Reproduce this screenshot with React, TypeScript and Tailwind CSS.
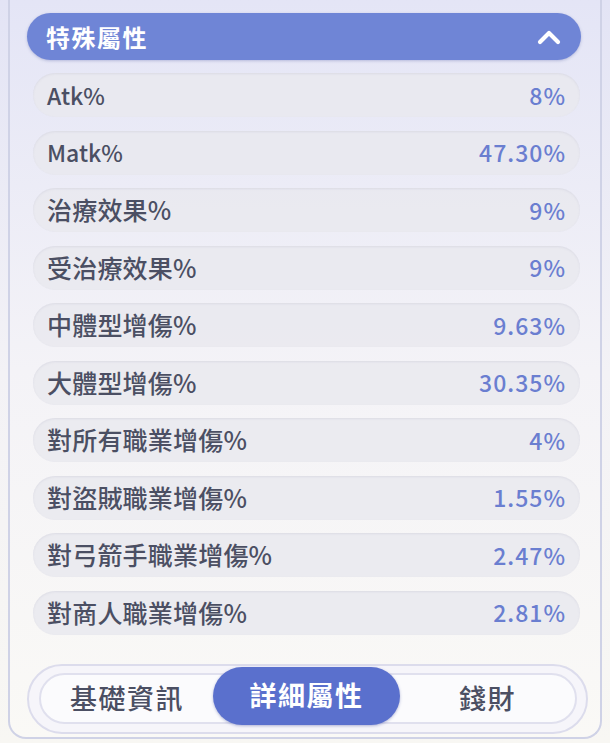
const rows: Array<[string, string]> = [
  ["Atk%", "8%"],
  ["Matk%", "47.30%"],
  ["治療效果%", "9%"],
  ["受治療效果%", "9%"],
  ["中體型增傷%", "9.63%"],
  ["大體型增傷%", "30.35%"],
  ["對所有職業增傷%", "4%"],
  ["對盜賊職業增傷%", "1.55%"],
  ["對弓箭手職業增傷%", "2.47%"],
  ["對商人職業增傷%", "2.81%"],
];

function StatRow({ label, value }: { label: string; value: string }) {
  const latin = /^[A-Za-z%]+$/.test(label);
  return (
    <div className="flex h-[44px] items-center justify-between rounded-full bg-[#e9e9ef]/85 px-[14px] shadow-[inset_0_1px_2px_rgba(180,180,200,0.25)]">
      <span
        className={`font-medium text-[#4b4f63] ${latin ? "text-[23px] tracking-[0px]" : "text-[25px] tracking-[0.2px]"}`}
      >
        {label}
      </span>
      <span className="text-[23px] font-medium tracking-[1px] text-[#6a7ed0]">{value}</span>
    </div>
  );
}

export default function App() {
  return (
    <div
      className="h-[743px] w-[610px] overflow-hidden bg-gradient-to-b from-[#e3e4f5] via-[#f3f2f6] to-[#f8f7f3]"
      style={{ fontFamily: '"Noto Sans CJK TC", "Noto Sans", sans-serif' }}
    >
      <div className="mx-[8px] flex h-[739px] flex-col rounded-b-[18px] border-x-2 border-b-2 border-[#cfd2e6] bg-gradient-to-b from-[#e4e5f6] via-[#f4f3f7] to-[#faf9f6] pl-[17px] pr-[19px] pt-[13px]">
        <div className="flex h-[47px] items-center justify-between rounded-full bg-[#6f85d6] pl-[19px] pr-[20px] shadow-[0_1px_3px_rgba(90,100,170,0.35)]">
          <span className="text-[24px] font-bold tracking-[1.5px] text-white">特殊屬性</span>
          <svg width="24" height="16" viewBox="0 0 24 16" fill="none">
            <path d="M3 13 L12 4 L21 13" stroke="white" strokeWidth="4.2" strokeLinecap="round" strokeLinejoin="round" />
          </svg>
        </div>

        <div className="mt-[13px] flex flex-col gap-[13.5px] pl-[6px] pr-[1px]">
          {rows.map(([label, value]) => (
            <StatRow key={label} label={label} value={value} />
          ))}
        </div>

        <div className="-mr-[7px] mt-[29px] flex h-[70px] items-center rounded-full border-2 border-[#dcdcec] bg-[#f6f5fa] pl-[10px] pr-[9px]">
          <div className="flex h-[51px] flex-1 items-center rounded-full border-2 border-[#e0e0ee] bg-white/60">
            <div className="flex w-[172px] items-center justify-center text-[27px] font-medium tracking-[1.5px] text-[#4b4f63]">
              基礎資訊
            </div>
            <div className="mb-[6px] flex h-[58px] w-[187px] items-center justify-center rounded-full bg-[#5a70cd] text-[27px] font-bold tracking-[1.5px] text-white shadow-[0_1px_3px_rgba(70,80,160,0.4)]">
              詳細屬性
            </div>
            <div className="flex flex-1 items-center justify-center text-[27px] font-medium tracking-[1.5px] text-[#4b4f63]">
              錢財
            </div>
          </div>
        </div>
      </div>
    </div>
  );
}
